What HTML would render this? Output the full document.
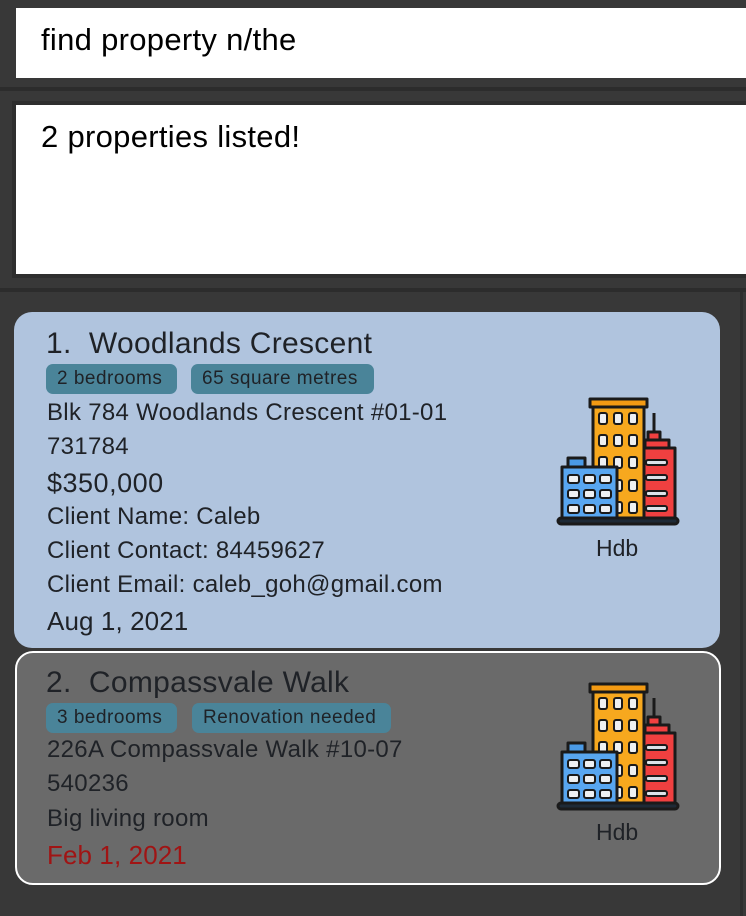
<!DOCTYPE html>
<html><head><meta charset="utf-8"><style>
*{margin:0;padding:0;box-sizing:border-box}
body{width:746px;height:916px;background:#383838;position:relative;overflow:hidden;font-family:"Liberation Sans",sans-serif;color:#1f2227}
.abs{position:absolute;white-space:nowrap}
.cmd{left:16px;top:8px;width:730px;height:70px;background:#fff}
.band{left:0;width:746px;height:4px;background:#2c2c2c}
.res{left:12px;top:101px;width:740px;height:177px;background:#fff;border:4px solid #2e2e2e}
.card{border-radius:18px}
.tag{position:absolute;height:30px;top:0;background:#4a8499;border-radius:7px;font-size:19px;line-height:30px;padding:0 11px;letter-spacing:0.5px}
.t{font-size:24px;letter-spacing:0.3px;line-height:26px}
</style></head><body>
<div class="abs cmd"></div>
<div class="abs" style="left:41px;top:22px;font-size:31px;color:#000;letter-spacing:0.3px">find property n/the</div>
<div class="abs band" style="top:87px"></div>
<div class="abs res"></div>
<div class="abs" style="left:41px;top:119px;font-size:31px;color:#000;letter-spacing:0.3px">2 properties listed!</div>
<div class="abs band" style="top:288px"></div>
<div class="abs" style="left:740px;top:292px;width:3px;height:624px;background:#2e2e2e"></div>

<div class="abs card" style="left:14px;top:312px;width:706px;height:336px;background:#b0c4de"></div>
<div class="abs" style="left:46px;top:327px;font-size:30px;letter-spacing:0.3px">1.&nbsp; Woodlands Crescent</div>
<div class="abs" style="left:46px;top:364px;width:400px;height:30px">
<div class="tag" style="left:0;width:131px">2 bedrooms</div>
<div class="tag" style="left:145px;width:183px">65 square metres</div></div>
<div class="abs t" style="left:47px;top:400px">Blk 784 Woodlands Crescent #01-01</div>
<div class="abs t" style="left:47px;top:434px">731784</div>
<div class="abs" style="left:47px;top:468px;font-size:27px;letter-spacing:0.5px">$350,000</div>
<div class="abs t" style="left:47px;top:504px">Client Name: Caleb</div>
<div class="abs t" style="left:47px;top:538px">Client Contact: 84459627</div>
<div class="abs t" style="left:47px;top:572px">Client Email: caleb_goh@gmail.com</div>
<div class="abs" style="left:47px;top:606px;font-size:26px;letter-spacing:0.1px">Aug 1, 2021</div>
<div class="abs" style="left:596px;top:535px;font-size:23px">Hdb</div>

<div class="abs card" style="left:15px;top:651px;width:706px;height:234px;background:#6a6a6a;border:2px solid #fff"></div>
<div class="abs" style="left:46px;top:666px;font-size:30px;letter-spacing:0.3px">2.&nbsp; Compassvale Walk</div>
<div class="abs" style="left:46px;top:703px;width:400px;height:30px">
<div class="tag" style="left:0;width:131px">3 bedrooms</div>
<div class="tag" style="left:146px;width:199px">Renovation needed</div></div>
<div class="abs t" style="left:47px;top:737px">226A Compassvale Walk #10-07</div>
<div class="abs t" style="left:47px;top:771px">540236</div>
<div class="abs t" style="left:47px;top:806px">Big living room</div>
<div class="abs" style="left:47px;top:840px;font-size:26px;letter-spacing:0.1px;color:#a01414">Feb 1, 2021</div>
<div class="abs" style="left:596px;top:819px;font-size:23px">Hdb</div>

<svg class="abs" style="left:0;top:0" width="746" height="916">
<defs>
<g id="b" stroke="#1a1a1a" stroke-width="3" stroke-linejoin="round">
<line x1="98" y1="15" x2="98" y2="34"/>
<rect x="92" y="34" width="12" height="8" fill="#f04040"/>
<rect x="89" y="42" width="24" height="8" fill="#f04040"/>
<rect x="87" y="50" width="32" height="72" fill="#f04040"/>
<g fill="#dde3ea" stroke-width="2">
<rect x="90" y="62" width="21" height="5" rx="2"/><rect x="90" y="77" width="21" height="5" rx="2"/>
<rect x="90" y="93" width="21" height="5" rx="2"/><rect x="90" y="108" width="21" height="5" rx="2"/></g>
<rect x="37" y="9" width="51" height="113" fill="#f7a81e"/>
<rect x="34" y="1" width="57" height="8" fill="#f39a13"/>
<g fill="#eef0f2" stroke-width="2">
<rect x="43" y="15" width="8" height="11" rx="2"/><rect x="58" y="15" width="8" height="11" rx="2"/><rect x="73" y="15" width="8" height="11" rx="2"/>
<rect x="43" y="37" width="8" height="11" rx="2"/><rect x="58" y="37" width="8" height="11" rx="2"/><rect x="73" y="37" width="8" height="11" rx="2"/>
<rect x="43" y="59" width="8" height="11" rx="2"/><rect x="58" y="59" width="8" height="11" rx="2"/><rect x="73" y="59" width="8" height="11" rx="2"/>
<rect x="58" y="82" width="8" height="11" rx="2"/><rect x="73" y="82" width="8" height="11" rx="2"/>
<rect x="58" y="104" width="8" height="11" rx="2"/><rect x="73" y="104" width="8" height="11" rx="2"/></g>
<rect x="12" y="60" width="17" height="9" fill="#4a9ae6"/>
<rect x="6" y="69" width="55" height="53" fill="#58a6f0"/>
<g fill="#eef0f2" stroke-width="2">
<rect x="12" y="77" width="11" height="8" rx="2"/><rect x="28" y="77" width="11" height="8" rx="2"/><rect x="44" y="77" width="11" height="8" rx="2"/>
<rect x="12" y="92" width="11" height="8" rx="2"/><rect x="28" y="92" width="11" height="8" rx="2"/><rect x="44" y="92" width="11" height="8" rx="2"/>
<rect x="12" y="107" width="11" height="8" rx="2"/><rect x="28" y="107" width="11" height="8" rx="2"/><rect x="44" y="107" width="11" height="8" rx="2"/></g>
<rect x="2" y="120" width="120" height="6" rx="3" fill="#1e2a36"/>
</g></defs>
<use href="#b" x="556" y="398"/>
<use href="#b" x="556" y="683"/>
</svg>
</body></html>
